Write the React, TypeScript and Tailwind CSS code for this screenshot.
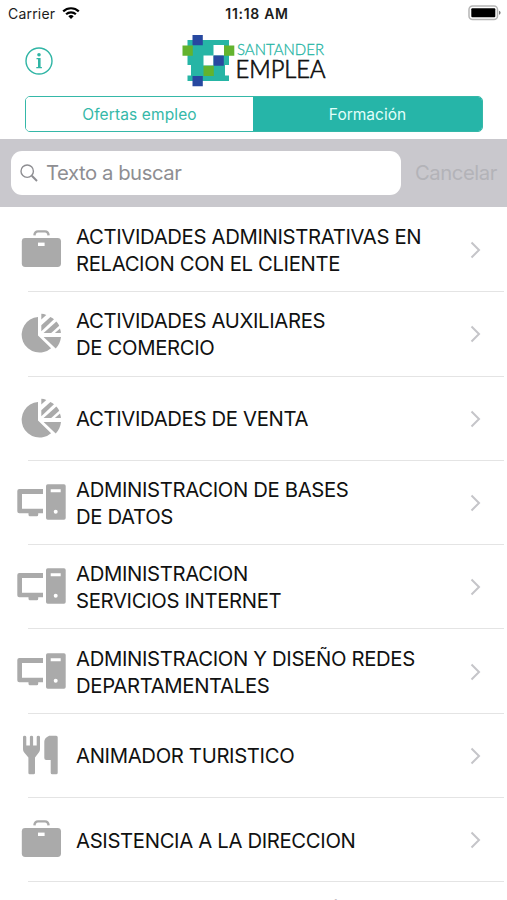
import React, { useState } from 'react'

type IconName = 'briefcase' | 'pie' | 'computer' | 'cutlery'

interface Course {
    icon: IconName
    lines: string[]
}

const courses: Course[] = [
    { icon: 'briefcase', lines: ['ACTIVIDADES ADMINISTRATIVAS EN', 'RELACION CON EL CLIENTE'] },
    { icon: 'pie', lines: ['ACTIVIDADES AUXILIARES', 'DE COMERCIO'] },
    { icon: 'pie', lines: ['ACTIVIDADES DE VENTA'] },
    { icon: 'computer', lines: ['ADMINISTRACION DE BASES', 'DE DATOS'] },
    { icon: 'computer', lines: ['ADMINISTRACION', 'SERVICIOS INTERNET'] },
    { icon: 'computer', lines: ['ADMINISTRACION Y DISEÑO REDES', 'DEPARTAMENTALES'] },
    { icon: 'cutlery', lines: ['ANIMADOR TURISTICO'] },
    { icon: 'briefcase', lines: ['ASISTENCIA A LA DIRECCION'] },
    { icon: 'briefcase', lines: ['AUXILIAR DE FARMACIA Y ÓPTICA', 'COMERCIAL'] },
]

const CourseIcon: React.FC<{ name: IconName }> = ({ name }) => (
    <svg viewBox="0 0 50 40" className="-mt-0.5 h-10 w-[50px] shrink-0" fill="#aaaaaa">
        {name === 'briefcase' && (
            <>
                <path d="M18.4 6.4C18.7 3.6 19.8 2.4 22 2.4h7c2.2 0 3.3 1.2 3.6 4" fill="none" stroke="#aaaaaa" strokeWidth="2.4" />
                <rect x="5.8" y="9" width="39.2" height="29" rx="3.4" />
                <rect x="22" y="13.6" width="6.6" height="3.4" fill="#fff" />
            </>
        )}
        {name === 'pie' && (
            <>
                <path d="M22 4A17.8 17.8 0 1 0 35.1 35.2L22 22.4z" />
                <path d="M27.6 24H45q-.7 6.8-5.3 11.4z" />
                <path d="M25.3 .8q2.6.1 5 1.2l-5 4.4z" />
                <path d="M25.3 12.2 34.4 3.9q2 1 3.6 2.4L25.3 18.2z" />
                <path d="M27.6 20 40.4 8.4q1.7 1.900 2.800 4.400L35.2 20z" />
                <path d="M38.9 20 44 15.4q.8 2.2.9 4.6z" />
            </>
        )}
        {name === 'computer' && (
            <>
                <path d="M27 7H3.3q-2 0-2 2v20.3q0 2 2 2h9.2v1.5q0 1.5 1.5 1.5h6.7q1.5 0 1.5-1.5v-1.5H27v-4.6H6V12h21z" />
                <path fillRule="evenodd" d="M31.8 2.3H48q1.7 0 1.7 1.7v32q0 1.7-1.7 1.7H31.8Q30 37.7 30 36V4q0-1.7 1.8-1.7zM34.7 7.3v3h10v-3zM39.7 27.7a2 2 0 1 0 0 4 2 2 0 0 0 0-4z" />
            </>
        )}
        {name === 'cutlery' && (
            <>
                <path d="M7 2q0-1.3 1.6-1.3T10.3 2v8.6h3.6V2q0-1.3 1.6-1.3T17.1 2v8.6h3.6V2q0-1.3 1.6-1.3T24 2v12.3q0 1.7-1.2 3.2L19 22.500v15.400q0 1.400-1.400 1.400h-3.800q-1.400 0-1.400-1.400V22.500l-4.200-5Q7 16 7 14.300z" />
                <path d="M33.2.7h7q1.5 0 1.5 1.5v35.600q0 1.500-1.500 1.500h-4q-1.500 0-1.500-1.500V25h-4.500q-1.900 0-1.900-1.900V6.500Q28.300 3 33.200.7z" />
            </>
        )}
    </svg>
)

const StatusBar = () => (
    <div className="relative flex h-7 items-center justify-between pl-2 pr-1.5 text-[14px] text-[#1c1c1c]">
        <div className="flex items-center gap-[7px]">
            <span className="-mt-0.5 tracking-[0.2px]">Carrier</span>
            <svg viewBox="0 0 18 14" className="-mt-0.5 h-3.5 w-[18px]" fill="none" stroke="#000" strokeWidth="2.2">
                <path d="M1.2 5.4a11.2 11.2 0 0 1 15.6 0" />
                <path d="M4.1 8.3a7 7 0 0 1 9.8 0" />
                <path d="M9 13 6.3 10.3a3.9 3.9 0 0 1 5.4 0z" fill="#000" stroke="none" />
            </svg>
        </div>
        <span className="absolute inset-x-0 top-[3px] pl-[7px] text-center font-semibold tracking-[0.7px]">11:18 AM</span>
        <svg viewBox="0 0 33 16" className="-mt-0.5 h-4 w-[33px]">
            <rect x="1" y="1" width="28.5" height="13.6" rx="3.5" fill="#fff" stroke="#b5b5b5" strokeWidth="1.5" />
            <rect x="3.3" y="3.3" width="24" height="9" rx="1" fill="#000" />
            <path d="M31 5.8q1.6.6 1.6 2T31 9.8z" fill="#777" />
        </svg>
    </div>
)

const Logo = () => (
    <svg viewBox="0 0 146 52" className="h-[52px] w-[146px] overflow-visible">
        <path d="M5.5 5H47v25h-4v10.5h4V46H5.5v-5.5H9V30H5.5z" fill="#26b5a5" />
        <path d="M31.5 10H42v10.5H31.5zM21.5 20.5h10v10h-10z" fill="#fff" />
        <path d="M10.5 0h10.3v10.3H10.5zM31.5 20.5h10.3v10.3H31.5zM10.5 41h10.3v10.3H10.5z" fill="#2748a0" />
        <path d="M.5 10.5h10.3v10.3H.5zM42 10.5h10.3v10.3H42zM21.5 30.8h10.3v10.3H21.5z" fill="#63b32e" />
        <text x="55" y="20" fontFamily="Lato" fontSize="15.5" fontWeight="300" fill="#26b5a5" stroke="#26b5a5" strokeWidth="0.3" textLength="87" lengthAdjust="spacingAndGlyphs">SANTANDER</text>
        <text x="53.5" y="43" fontFamily="Lato" fontSize="25" fontWeight="300" fill="#111" stroke="#111" strokeWidth="0.7" textLength="90" lengthAdjust="spacingAndGlyphs">EMPLEA</text>
    </svg>
)

const CourseRow: React.FC<{ course: Course }> = ({ course }) => (
    <li className="relative flex h-[84.3px] items-center pl-4 pr-[26px]">
        <CourseIcon name={course.icon} />
        <div className="ml-2.5 flex-1 whitespace-nowrap text-[20.3px] leading-[27px] tracking-[-0.34px] text-[#111]">
            {course.lines.map((line) => (
                <div key={line}>{line}</div>
            ))}
        </div>
        <svg viewBox="0 0 11 18" className="h-[18px] w-[11px]" fill="none" stroke="#c5c5c9" strokeWidth="2">
            <path d="M1.5 1.5 9 9l-7.5 7.5" />
        </svg>
        <div className="absolute bottom-0 left-7 right-[3px] h-px bg-[#e4e4e4]" />
    </li>
)

export default function App() {
    const [tab, setTab] = useState('formacion')

    const tabClass = (id: string) =>
        tab === id ? 'bg-[#26b5a8] text-[#e2fffa]' : 'bg-white text-[#35b8a8]'

    return (
        <div className="h-[900px] w-[507px] overflow-hidden bg-white font-['Inter',sans-serif]">
            <StatusBar />
            <header className="relative flex h-[68px] justify-center pt-[7px]">
                <button className="absolute left-[25px] top-[19px]">
                    <svg viewBox="0 0 28 28" className="size-7" fill="none" stroke="#30b5a5">
                        <circle cx="14" cy="14" r="13" strokeWidth="1.4" />
                        <circle cx="14" cy="7.7" r="1.8" fill="#30b5a5" stroke="none" />
                        <path d="M11.5 11.6H14v8.6M11.3 20.7h5.6" strokeWidth="1.2" />
                        <path d="M14.3 11v9.7" strokeWidth="2.6" />
                    </svg>
                </button>
                <div className="pl-[3px]">
                    <Logo />
                </div>
            </header>
            <div className="ml-[25px] mr-6 flex h-9 overflow-hidden rounded-[5px] border-[1.5px] border-[#35b8a8] text-[15.5px]">
                <button className={`w-[227px] pt-px tracking-[0.12px] ${tabClass('ofertas')}`} onClick={() => setTab('ofertas')}>Ofertas empleo</button>
                <button className={`flex-1 pt-px ${tabClass('formacion')}`} onClick={() => setTab('formacion')}>Formación</button>
            </div>
            <div className="mt-[7px] flex h-[68px] items-center bg-[#c9c8cd] pl-[11px] text-[20.3px] tracking-[-0.45px]">
                <div className="flex h-11 w-[390px] items-center rounded-[11px] bg-white pl-[9px] text-[#8e8e92]">
                    <svg viewBox="0 0 18 18" className="size-[18px]" fill="none" stroke="#8e8e92">
                        <circle cx="7.2" cy="7.2" r="6.2" strokeWidth="1.4" />
                        <path d="M11.8 11.8 17 17" strokeWidth="2" />
                    </svg>
                    <span className="ml-2">Texto a buscar</span>
                </div>
                <span className="ml-3.5 text-[#b3b3b8]">Cancelar</span>
            </div>
            <ul className="pt-px">
                {courses.map((course, index) => (
                    <CourseRow key={index} course={course} />
                ))}
            </ul>
        </div>
    )
}
